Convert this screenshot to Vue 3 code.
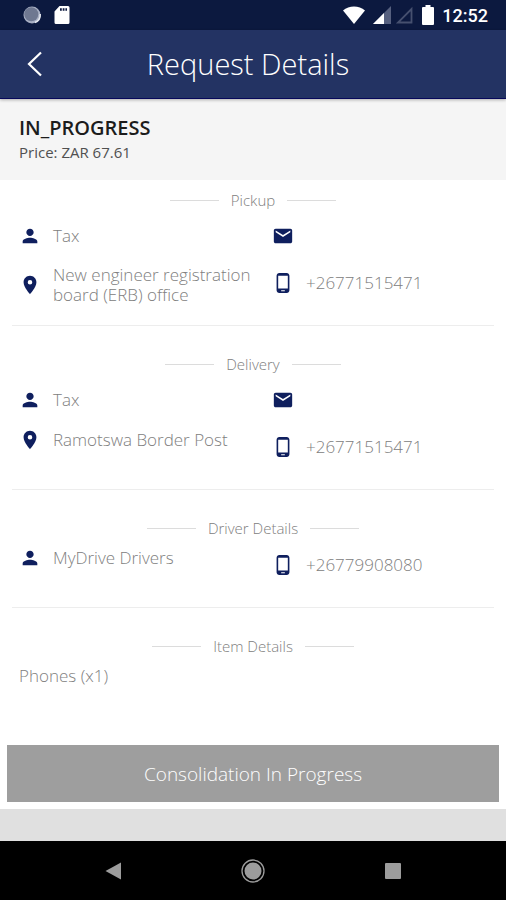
<template>
  <div class="screen">
    <div class="status-bar">
      <div class="status-left">
        <svg width="20" height="20" viewBox="0 0 20 20">
          <circle cx="10" cy="10" r="8.5" fill="#a9b0c4" />
          <circle cx="9.3" cy="9.3" r="7" fill="#6f7891" />
          <path d="M13 17.5A8.5 8.5 0 0 0 18.2 9" fill="none" stroke="#e4e7ef" stroke-width="1.6" />
        </svg>
        <svg width="16" height="20" viewBox="0 0 16 20">
          <path d="M5.500 1H14a1.500 1.500 0 0 1 1.500 1.500v15A1.500 1.500 0 0 1 14 19H2A1.500 1.500 0 0 1 .5 17.500V6.500z" fill="#fff" />
          <path d="M6 3.200h1.800v2.500H6zM8.700 3.200h1.800v2.500H8.700zM11.400 3.200h1.600v2.500h-1.600z" fill="#0c193f" />
        </svg>
      </div>
      <div class="status-right">
        <svg width="22" height="18" viewBox="0 0 22 18">
          <path d="M0 4.500C6-1 16-1 22 4.500L11 18z" fill="#fff" />
        </svg>
        <svg class="signal" width="18" height="18" viewBox="0 0 18 18">
          <path d="M18 0v18H0z" fill="#56607f" />
          <path d="M11 7v11H0z" fill="#fff" />
        </svg>
        <svg class="signal-empty" width="18" height="18" viewBox="0 0 18 18">
          <path d="M16.500 3v13.500H3z" fill="none" stroke="#46506f" stroke-width="1.800" />
        </svg>
        <svg class="battery" width="12" height="20" viewBox="0 0 12 20">
          <path d="M3.500 0h5v2H11a1 1 0 0 1 1 1v16a1 1 0 0 1-1 1H1a1 1 0 0 1-1-1V3a1 1 0 0 1 1-1h2.500z" fill="#fff" />
        </svg>
        <span class="time">12:52</span>
      </div>
    </div>

    <header class="header">
      <button class="back" aria-label="Back">
        <svg width="16" height="26" viewBox="0 0 16 26">
          <path d="M14 1.500L2 13l12 11.500" fill="none" stroke="#fff" stroke-width="2.200" />
        </svg>
      </button>
      <h1>Request Details</h1>
    </header>

    <div class="summary">
      <h2>{{ request.status }}</h2>
      <p>Price: {{ request.price }}</p>
    </div>

    <main class="content">
      <section v-for="stop in stops" :key="stop.title" class="section">
        <h3 class="section-title">{{ stop.title }}</h3>
        <div v-for="(row, index) in stop.rows" :key="index" :class="['row', { contact: row.contact }]">
          <div v-for="cell in row.cells" :key="cell.icon" :class="['cell', cell.icon]">
            <svg width="22" height="22" viewBox="0 0 24 24">
              <path :d="icons[cell.icon]" fill="#0f1f5e" fill-rule="evenodd" />
            </svg>
            <span>{{ cell.text }}</span>
          </div>
        </div>
      </section>

      <section class="section">
        <h3 class="section-title">Item Details</h3>
        <p v-for="item in items" :key="item.name" class="item">{{ item.name }} (x{{ item.count }})</p>
      </section>
    </main>

    <button class="action">Consolidation In Progress</button>
    <div class="footer-strip"></div>

    <nav class="nav-bar">
      <button aria-label="Go back">
        <svg width="24" height="24" viewBox="0 0 24 24">
          <path d="M20 3.500v17L4.500 12z" fill="#9c9c9c" />
        </svg>
      </button>
      <button aria-label="Home">
        <svg width="24" height="24" viewBox="0 0 24 24">
          <circle cx="12" cy="12" r="11" fill="none" stroke="#9c9c9c" stroke-width="1.300" />
          <circle cx="12" cy="12" r="8.500" fill="#9c9c9c" />
        </svg>
      </button>
      <button aria-label="Recent apps">
        <svg width="24" height="24" viewBox="0 0 24 24">
          <rect x="4" y="4" width="16" height="16" rx="1" fill="#9c9c9c" />
        </svg>
      </button>
    </nav>
  </div>
</template>

<script setup>
import { ref } from 'vue';

const icons = {
  person: 'M12 12c2.210 0 4-1.790 4-4s-1.790-4-4-4-4 1.790-4 4 1.790 4 4 4zm0 2c-2.670 0-8 1.340-8 4v2h16v-2c0-2.660-5.330-4-8-4z',
  place: 'M12 2C8.130 2 5 5.130 5 9c0 5.250 7 13 7 13s7-7.750 7-13c0-3.870-3.130-7-7-7zm0 9.500a2.500 2.500 0 1 1 0-5 2.500 2.500 0 0 1 0 5z',
  email: 'M20 4H4c-1.100 0-2 .9-2 2v12c0 1.100.9 2 2 2h16c1.100 0 2-.9 2-2V6c0-1.100-.9-2-2-2zm0 4l-8 5-8-5V6l8 5 8-5v2z',
  phone: 'M16 1H8C6.340 1 5 2.340 5 4v16c0 1.660 1.340 3 3 3h8c1.660 0 3-1.340 3-3V4c0-1.660-1.340-3-3-3zm-2 20h-4v-1h4v1zm3.250-3H6.750V4h10.500v14z'
};

const request = ref({ status: 'IN_PROGRESS', price: 'ZAR 67.61' });

const buildStop = (title, name, address, phone) => ({
  title,
  rows: [
    { cells: [{ icon: 'person', text: name }, { icon: 'email', text: '' }] },
    { contact: true, cells: [{ icon: 'place', text: address }, { icon: 'phone', text: phone }] }
  ]
});

const stops = ref([
  buildStop('Pickup', 'Tax', 'New engineer registration board (ERB) office', '+26771515471'),
  buildStop('Delivery', 'Tax', 'Ramotswa Border Post', '+26771515471'),
  {
    title: 'Driver Details',
    rows: [
      { contact: true, cells: [{ icon: 'person', text: 'MyDrive Drivers' }, { icon: 'phone', text: '+26779908080' }] }
    ]
  }
]);

const items = ref([{ name: 'Phones', count: 1 }]);
</script>

<style>
body {
  margin: 0;
}
</style>

<style scoped>
.screen {
  display: flex;
  flex-direction: column;
  min-height: 100vh;
  background-color: #fff;
  font-family: "Open Sans", "Noto Sans", sans-serif;
  font-weight: 300;
  color: #808080;
}

h1,
h2,
h3,
p {
  margin: 0;
  font-weight: inherit;
}

button {
  border: none;
  padding: 0;
  font: inherit;
  cursor: pointer;
}

svg {
  display: block;
  flex-shrink: 0;
}

.status-bar {
  display: flex;
  justify-content: space-between;
  align-items: center;
  height: 30px;
  padding: 0 18px 0 22px;
  background-color: #0c193f;
}

.status-left,
.status-right {
  display: flex;
  align-items: center;
}

.status-left {
  gap: 12px;
}

.signal {
  margin-left: 8px;
}

.signal-empty {
  margin-left: 4px;
}

.battery {
  margin: 0 8px 0 9px;
}

.time {
  font-family: Roboto, sans-serif;
  font-size: 18px;
  font-weight: 500;
  color: #fff;
}

.header {
  display: grid;
  grid-template-columns: 70px 1fr 80px;
  align-items: center;
  height: 68px;
  border-bottom: 1px solid #07085a;
  background-color: #233363;
  box-shadow: 0 1px 3px rgba(0, 0, 0, 0.3);
  z-index: 1;
}

.header h1 {
  font-size: 29px;
  line-height: 32px;
  text-align: center;
  color: #fff;
}

.back {
  display: flex;
  justify-content: center;
  background: none;
}

.summary {
  box-sizing: border-box;
  height: 81px;
  padding: 16px 19px;
  background-color: #f5f5f5;
}

.summary h2 {
  font-size: 20px;
  line-height: 25px;
  font-weight: 600;
  color: #1c1c1c;
}

.summary p {
  font-size: 15px;
  line-height: 25px;
  font-weight: 400;
  color: #505050;
}

.content {
  flex-grow: 1;
}

.section {
  padding: 10px 0 0;
}

.section + .section {
  padding-top: 28px;
}

.section:not(:last-child)::after {
  content: '';
  display: block;
  height: 1px;
  margin: 9px 12px 0;
  background-color: #ededed;
}

.section-title {
  display: flex;
  justify-content: center;
  align-items: center;
  gap: 12px;
  font-size: 15px;
  line-height: 20px;
}

.section-title::before,
.section-title::after {
  content: '';
  width: 49px;
  height: 1px;
  background-color: #dcdcdc;
}

.row {
  display: grid;
  grid-template-columns: 1fr 1fr;
  padding-top: 6px;
}

.row.contact {
  padding-top: 0;
  min-height: 60px;
}

.cell {
  display: flex;
  align-items: center;
  align-self: start;
  gap: 12px;
  padding: 9px 0 9px 19px;
  font-size: 17px;
  line-height: 20px;
}

.cell.phone {
  padding-top: 16px;
}

.item {
  padding: 10px 19px;
  font-size: 17px;
  line-height: 20px;
}

.action {
  height: 57px;
  margin: 7px;
  background-color: #9e9e9e;
  font-size: 19px;
  color: #fff;
}

.footer-strip {
  height: 32px;
  background-color: #e0e0e0;
}

.nav-bar {
  display: flex;
  justify-content: center;
  align-items: center;
  gap: 116px;
  height: 59px;
  background-color: #000;
}

.nav-bar button {
  background: none;
}
</style>
